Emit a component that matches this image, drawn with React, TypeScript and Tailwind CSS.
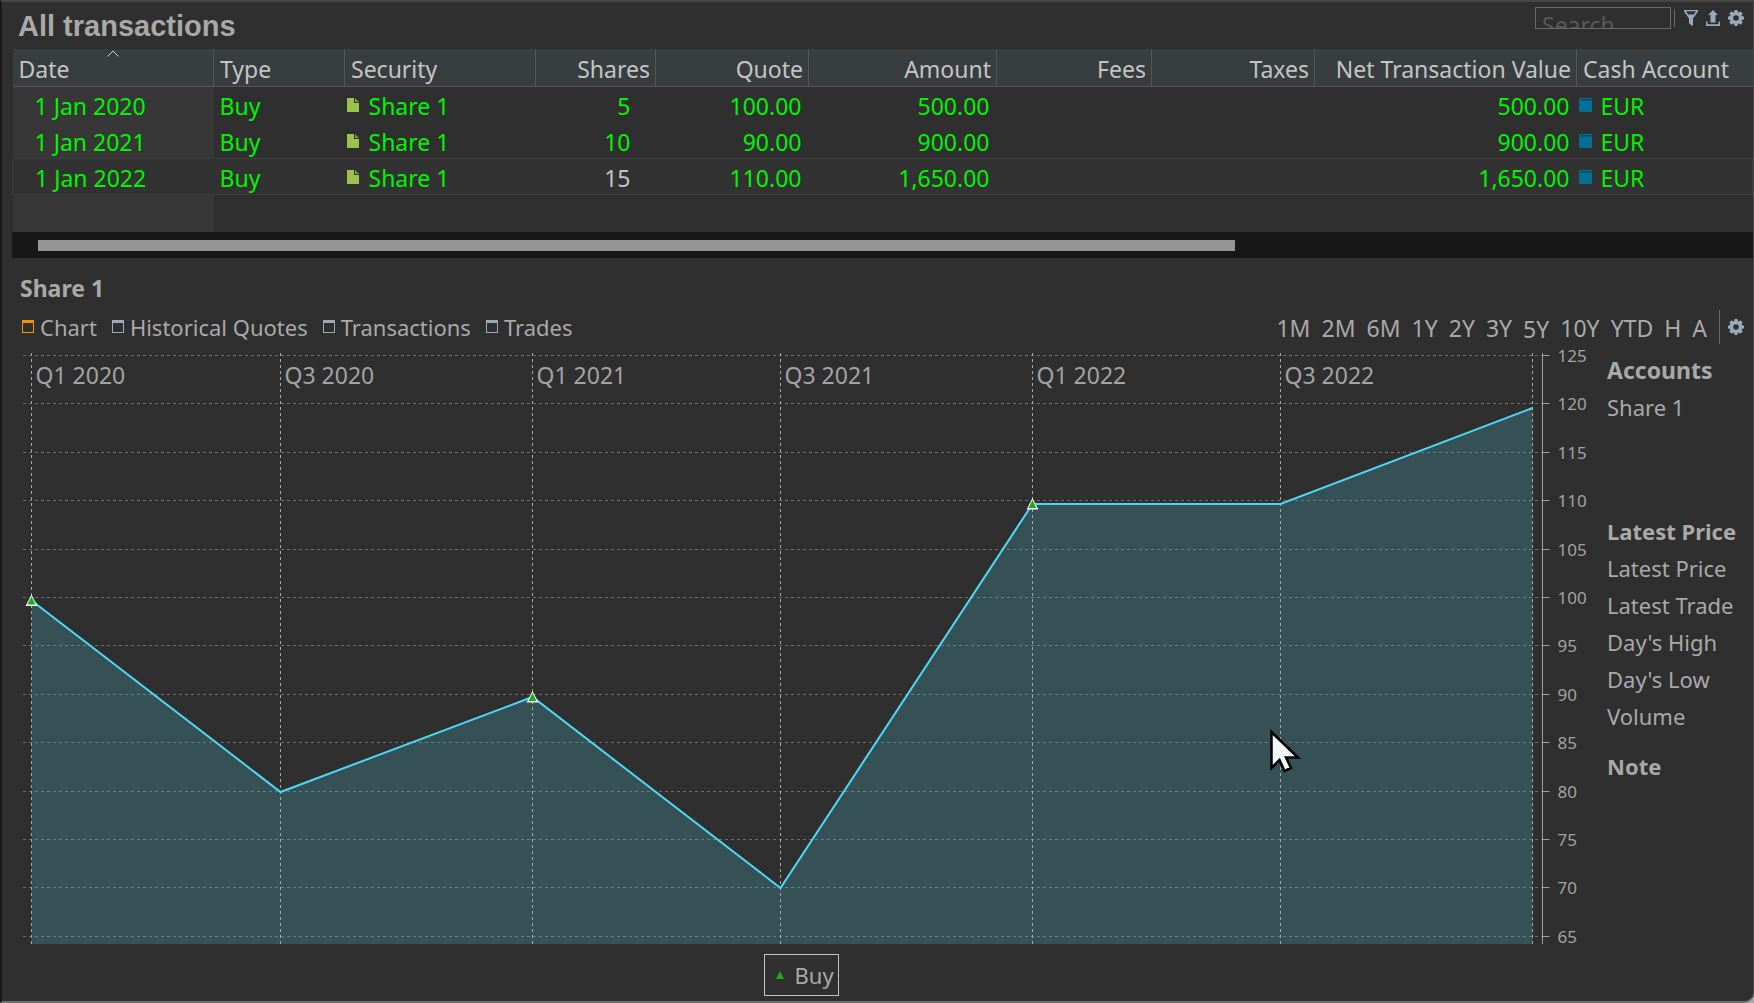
import React, { useState } from 'react';

const COLUMNS = [
  { label: 'Date', width: 'w-[201px]' },
  { label: 'Type', width: 'w-[131px]' },
  { label: 'Security', width: 'w-[191px]' },
  { label: 'Shares', width: 'w-[120px]', right: true },
  { label: 'Quote', width: 'w-[153px]', right: true },
  { label: 'Amount', width: 'w-[188px]', right: true },
  { label: 'Fees', width: 'w-[155px]', right: true },
  { label: 'Taxes', width: 'w-[163px]', right: true },
  { label: 'Net Transaction Value', width: 'w-[262px]', right: true },
  { label: 'Cash Account', width: 'w-auto' },
];

const TRANSACTIONS = [
  { date: '1 Jan 2020', shares: '5', quote: '100.00', amount: '500.00' },
  { date: '1 Jan 2021', shares: '10', quote: '90.00', amount: '900.00' },
  { date: '1 Jan 2022', shares: '15', quote: '110.00', amount: '1,650.00', active: true },
];

const TABS = ['Chart', 'Historical Quotes', 'Transactions', 'Trades'];
const RANGES = ['1M', '2M', '6M', '1Y', '2Y', '3Y', '5Y', '10Y', 'YTD', 'H', 'A'];

// chart space
const QUARTERS = [
  { x: 11.5, label: 'Q1 2020' },
  { x: 260.5, label: 'Q3 2020' },
  { x: 512.5, label: 'Q1 2021' },
  { x: 760.5, label: 'Q3 2021' },
  { x: 1012.5, label: 'Q1 2022' },
  { x: 1260.5, label: 'Q3 2022' },
  { x: 1512.5, label: '' },
];
const PRICES = [250.5, 442, 347, 538, 154, 154, 58];
const TICKS = [125, 120, 115, 110, 105, 100, 95, 90, 85, 80, 75, 70, 65];
const BOTTOM = 594;
const AXIS_X = 1522.5;

const tickY = (i: number) => Math.round(i * 48.4) + 5.5;

const GearIcon = () => (
  <svg width="16" height="16" viewBox="0 0 16 16" fill="#9aaaba" aria-hidden="true">
    <path
      fillRule="evenodd"
      d="M6.6 0h2.8l.4 2 .9.4L12.4 1.3l2.3 2.3-1.1 1.7.4.9 2 .4v2.8l-2 .4-.4.9 1.1 1.7-2.3 2.3-1.7-1.1-.9.4-.4 2H6.6l-.4-2-.9-.4-1.7 1.1-2.3-2.3 1.1-1.7-.4-.9-2-.4V6.6l2-.4.4-.9L1.3 3.600l2.300-2.300 1.700 1.100.9-.4zM8 5.2a2.8 2.8 0 1 0 0 5.6 2.8 2.8 0 0 0 0-5.6z"
    />
  </svg>
);

const FilterIcon = () => (
  <svg width="14" height="16" viewBox="0 0 14 16" aria-hidden="true">
    <path fill="#9aaaba" fillRule="evenodd" d="M0 0h14v1.5L9 8.5V15.5H7.5L5 13v-4.5L0 1.5zM2 1.2L4.3 4.5h5.4L12 1.2z" />
  </svg>
);

const UploadIcon = () => (
  <svg width="14" height="16" viewBox="0 0 14 16" fill="#9aaaba" aria-hidden="true">
    <path d="M7 0l5 5H9.5v7.5h-5V5H2z" />
    <path d="M0 11.5h1.5v2.8h11v-2.8H14V16H0z" />
  </svg>
);

const PageIcon = () => (
  <svg width="12" height="14" viewBox="0 0 12 14" className="shrink-0" aria-hidden="true">
    <path fill="#9cc34c" d="M0 0h7v5h5v9H0z" />
    <path fill="#7f9c45" d="M8 0l4 4H8z" />
  </svg>
);

const AccountIcon = () => (
  <svg width="13" height="14" viewBox="0 0 13 14" className="shrink-0" aria-hidden="true">
    <path fill="#046e95" d="M0 1l1-1h12v1H2v1h11v12H1l-1-1z" />
    <path fill="#12485c" d="M1.5 1H13v1.5H1.5z" />
  </svg>
);

const TransactionTable = () => (
  <table className="w-full table-fixed border-collapse text-[23px] leading-[30px] text-[#00f500]">
    <thead>
      <tr className="h-[37px] bg-[#383d3f] text-[#c4c4c4]">
        {COLUMNS.map((col, i) => (
          <th
            key={col.label}
            scope="col"
            className={`relative p-0 border-b border-[#555] font-normal whitespace-nowrap ${col.width} ${i < COLUMNS.length - 1 ? 'border-r' : ''} ${col.right ? 'text-right pr-[5px]' : 'text-left pl-[6px]'}`}
          >
            <span className="block pt-[3px]">{col.label}</span>
            {i === 0 && (
              <svg className="absolute left-1/2 top-[1px] -ml-[6px]" width="12" height="7" aria-hidden="true">
                <path d="M0.5 6.5L6 1l5.5 5.5" fill="none" stroke="#d0d0d0" />
              </svg>
            )}
          </th>
        ))}
      </tr>
    </thead>
    <tbody>
      {TRANSACTIONS.map((t) => (
        <tr key={t.date} className={`h-[36px] ${t.active ? 'bg-[#323232] border border-[#3c3c3c]' : ''}`}>
          <td className={`p-0 pt-[4px] pl-[22px] ${t.active ? '' : 'bg-[#373737]'}`}>{t.date}</td>
          <td className="p-0 pt-[4px] pl-[6px]">Buy</td>
          <td className="p-0 pt-[4px] pl-[2px]">
            <span className="flex items-start gap-[10px]"><span className="pt-[7px]"><PageIcon /></span>Share 1</span>
          </td>
          <td className={`p-0 pt-[4px] pr-[25px] text-right ${t.active ? 'text-[#c4c4c4]' : ''}`}>{t.shares}</td>
          <td className="p-0 pt-[4px] pr-[7px] text-right">{t.quote}</td>
          <td className="p-0 pt-[4px] pr-[7px] text-right">{t.amount}</td>
          <td></td>
          <td></td>
          <td className="p-0 pt-[4px] pr-[7px] text-right">{t.amount}</td>
          <td className="p-0 pt-[4px] pl-[2px]">
            <span className="flex items-start gap-[9px]"><span className="pt-[7px]"><AccountIcon /></span>EUR</span>
          </td>
        </tr>
      ))}
      <tr className="h-[38px]">
        <td className="bg-[#373737]"></td>
        <td colSpan={9}></td>
      </tr>
    </tbody>
  </table>
);

const PriceChart = () => {
  const line = QUARTERS.map((q, i) => `${q.x},${PRICES[i]}`).join(' ');
  return (
    <svg viewBox="0 0 1570 597" className="block w-full" role="img" aria-label="Share 1 price chart">
      {TICKS.map((t, i) => (
        <line key={t} x1="3" x2={AXIS_X} y1={tickY(i)} y2={tickY(i)} stroke="#6c6c6c" strokeDasharray="3 3" />
      ))}
      <polygon points={`11.5,${BOTTOM} ${line} 1512.5,${BOTTOM}`} fill="#47b7cb" fillOpacity="0.25" />
      {QUARTERS.map((q) => (
        <g key={q.x}>
          <line x1={q.x} x2={q.x} y1="3" y2={BOTTOM} stroke="#a3a9a9" strokeDasharray="3 3" />
          <text x={q.x + 4} y="34" fontSize="23" fill="#a3a3a3">{q.label}</text>
        </g>
      ))}
      <polyline points={line} fill="none" stroke="#4dd8f8" strokeWidth="2" />
      {[0, 2, 4].map((i) => (
        <g key={i} transform={`translate(${QUARTERS[i].x} ${PRICES[i]})`}>
          <path d="M0 -6l6 11.5H-6z" fill="#f4f4f4" />
          <path d="M0 -4l4 8h-8z" fill="#1fa81f" />
        </g>
      ))}
      <line x1={AXIS_X} x2={AXIS_X} y1="3" y2={BOTTOM} stroke="#a3a3a3" />
      {TICKS.map((t, i) => (
        <g key={t}>
          <line x1={AXIS_X} x2={AXIS_X + 7} y1={tickY(i)} y2={tickY(i)} stroke="#a3a3a3" />
          <text x={AXIS_X + 15} y={tickY(i) + 6} fontSize="17" fill="#a3a3a3">{t}</text>
        </g>
      ))}
    </svg>
  );
};

const App: React.FC = () => {
  const [tab, setTab] = useState('Chart');
  const [range, setRange] = useState('5Y');
  const [search, setSearch] = useState('');

  return (
    <div className="min-h-screen flex bg-[#a8a8a8] font-['Noto_Sans',sans-serif]">
      <div className="flex-1 min-w-0 bg-[#2f2f2f] border-t-2 border-l-2 border-r border-b-2 border-t-[#464646] border-l-[#191919] border-r-[#4a4a4a] border-b-[#6e6e6e] rounded-br-[10px] text-[#a9a9a9] text-[22px] leading-[30px]">
        <header className="flex justify-between items-start h-[47px] pl-[16px] pr-[9px]">
          <h1 className="pt-[7px] font-['Liberation_Sans',sans-serif] font-bold text-[29px] leading-[34px]">All transactions</h1>
          <div className="flex items-start pt-[5px]">
            <div className="w-[136px] h-[22px] border border-[#6a6a6a] overflow-hidden">
              <input
                type="text"
                aria-label="Search"
                placeholder="Search"
                value={search}
                onChange={(e) => setSearch(e.target.value)}
                className="block w-full h-[34px] px-[6px] bg-transparent outline-none text-[23px] placeholder:text-[#585858]"
              />
            </div>
            <div className="w-px h-[18px] ml-[3px] mt-[2px] mr-[9px] bg-[#6a6a6a]"></div>
            <div className="flex gap-[8px] pt-[3px]">
              <button type="button" aria-label="Filter"><FilterIcon /></button>
              <button type="button" aria-label="Export"><UploadIcon /></button>
              <button type="button" aria-label="Table settings"><GearIcon /></button>
            </div>
          </div>
        </header>

        <div className="pl-[10px]">
          <TransactionTable />
          <div className="h-[26px] bg-[#171717] pl-[26px] pt-[8px]">
            <div className="w-[69.8%] h-[11px] bg-[#959595]"></div>
          </div>
        </div>

        <section className="pl-[18px]">
          <h2 className="pt-[15px] font-bold text-[23px]">Share 1</h2>
          <div className="flex items-center justify-between h-[34px] mt-[7px] pr-[9px]">
            <div className="flex gap-[15px] pl-[2px]">
              {TABS.map((name) => (
                <button key={name} type="button" onClick={() => setTab(name)} className="flex items-center gap-[6px]">
                  <span className={`w-[12px] h-[13px] mb-[2px] border border-t-[3px] ${name === tab ? 'border-[#f79400]' : 'border-[#9aaaba]'}`}></span>
                  {name}
                </button>
              ))}
            </div>
            <div className="flex items-center">
              <div className="flex gap-[11px] pt-[1px] text-[23px]">
                {RANGES.map((r) => (
                  <button key={r} type="button" onClick={() => setRange(r)} className={r === range ? 'pt-[2px]' : ''}>{r}</button>
                ))}
              </div>
              <div className="w-px h-[34px] ml-[12px] mr-[8px] bg-[#6a6a6a]"></div>
              <button type="button" aria-label="Chart settings"><GearIcon /></button>
            </div>
          </div>

          <div className="flex">
            <div className="relative flex-1 min-w-0 pt-[6px] pb-[5px]">
              <PriceChart />
              <svg className="absolute left-[1250px] top-[385px]" width="32" height="45" viewBox="0 0 32 45" aria-hidden="true">
                <path d="M1.5 3v36l8-8 5 11 6.5-3-5-10.5H28z" fill="#f4f6f6" stroke="#000" strokeWidth="2.5" />
              </svg>
              <div className="flex justify-center pt-[7px] pr-[8px]">
                <div className="flex w-[75px] h-[42px] items-center gap-[11px] pl-[11px] border border-[#c4c4c4]">
                  <svg width="8" height="8" aria-hidden="true"><path d="M4 0l4 8H0z" fill="#1fa81f" /></svg>
                  Buy
                </div>
              </div>
            </div>
            <aside className="w-[163px] pl-[17px] pt-[8px] leading-[37px] whitespace-nowrap">
              <h3 className="font-bold text-[23px]">Accounts</h3>
              <p>Share 1</p>
              <h3 className="pt-[87px] font-bold">Latest Price</h3>
              <p>Latest Price</p>
              <p>Latest Trade</p>
              <p>Day's High</p>
              <p>Day's Low</p>
              <p>Volume</p>
              <h3 className="pt-[13px] font-bold">Note</h3>
            </aside>
          </div>
        </section>
      </div>
    </div>
  );
};

export default App;
